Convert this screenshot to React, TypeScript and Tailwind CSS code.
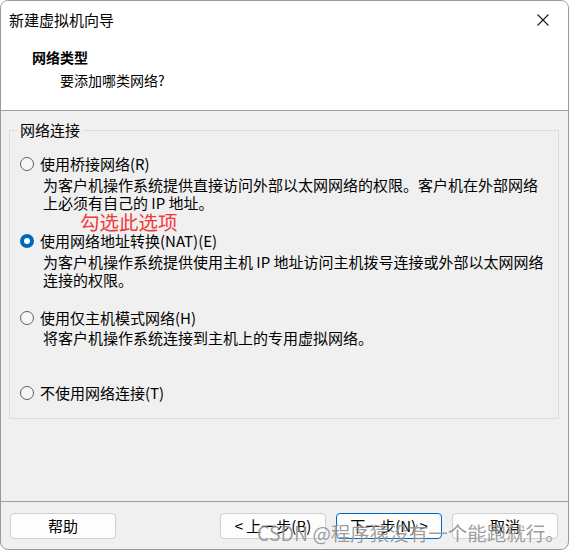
import React from "react";

const font = { fontFamily: '"Noto Sans CJK SC", "Noto Sans", sans-serif' };

function Radio({ checked }: { checked?: boolean }) {
  return checked ? (
    <span className="flex h-[14px] w-[14px] shrink-0 items-center justify-center rounded-full bg-[#0067c0]">
      <span className="h-[6px] w-[6px] rounded-full bg-white" />
    </span>
  ) : (
    <span className="h-[14px] w-[14px] shrink-0 rounded-full border border-[#5f5f5f] bg-[#f7f7f7]" />
  );
}

function Option({ label, checked, className }: { label: string; checked?: boolean; className?: string }) {
  return (
    <div className={"flex h-[20px] items-center gap-[6px] pl-[10px] text-[15px] leading-[20px] text-black " + (className ?? "")}>
      <Radio checked={checked} />
      <span>{label}</span>
    </div>
  );
}

function Desc({ lines, className }: { lines: string[]; className?: string }) {
  return (
    <div className={"pl-[33px] text-[15px] leading-[18px] text-black " + (className ?? "")}>
      {lines.map((l, i) => (
        <div key={i} className="whitespace-nowrap">
          {l}
        </div>
      ))}
    </div>
  );
}

function Btn({ children, primary }: { children: React.ReactNode; primary?: boolean }) {
  return (
    <button
      className={
        "flex h-[26px] w-[106px] items-center justify-center rounded-[4px] bg-[#fdfdfd] text-[15px] leading-[20px] text-black " +
        (primary ? "border border-[#0067c0]" : "border border-[#d0d0d0]")
      }
    >
      {children}
    </button>
  );
}

export default function App() {
  return (
    <div className="h-[551px] w-[570px] bg-white" style={font}>
      <div className="relative flex h-[550px] w-[569px] flex-col overflow-hidden rounded-[8px] border border-[#9a9a9a] bg-[#f0f0f0]">
        {/* header */}
        <div className="h-[110px] shrink-0 border-b border-[#a0a0a0] bg-white">
          <div className="flex h-[37px] items-center justify-between pl-[8px] pr-[19px]">
            <span className="text-[15px] leading-[20px] text-black">新建虚拟机向导</span>
            <svg width="12" height="12" viewBox="0 0 12 12" className="block">
              <path d="M0.5 0.5 L11.5 11.5 M11.5 0.5 L0.5 11.5" stroke="#1a1a1a" strokeWidth="1.1" fill="none" />
            </svg>
          </div>
          <div className="mt-[9px] pl-[31px] text-[14px] font-bold leading-[20px] text-black">网络类型</div>
          <div className="mt-[3px] pl-[59px] text-[14px] leading-[20px] text-black">要添加哪类网络?</div>
        </div>

        {/* body */}
        <div className="flex-1">
          <div className="relative ml-[8px] mt-[19px] h-[289px] w-[550px] border border-[#dcdcdc]">
            <span className="absolute left-[7px] top-[-11px] bg-[#f0f0f0] px-[3px] text-[15px] leading-[20px] text-black">
              网络连接
            </span>
            <Option className="mt-[23px]" label="使用桥接网络(R)" />
            <Desc
              className="mt-[2px]"
              lines={["为客户机操作系统提供直接访问外部以太网网络的权限。客户机在外部网络", "上必须有自己的 IP 地址。"]}
            />
            <div className="h-[19px] pl-[70px] text-[19.5px] leading-[19px] text-[#f03a3a]">勾选此选项</div>
            <Option checked label="使用网络地址转换(NAT)(E)" />
            <Desc
              className="mt-[2px]"
              lines={["为客户机操作系统提供使用主机 IP 地址访问主机拨号连接或外部以太网网络", "连接的权限。"]}
            />
            <Option className="mt-[19px]" label="使用仅主机模式网络(H)" />
            <Desc className="mt-[1px]" lines={["将客户机操作系统连接到主机上的专用虚拟网络。"]} />
            <Option className="mt-[36px]" label="不使用网络连接(T)" />
          </div>
        </div>

        {/* footer */}
        <div className="flex h-[48px] shrink-0 items-start border-t border-[#a0a0a0] pl-[9px] pr-[10px] pt-[11px]">
          <Btn>帮助</Btn>
          <div className="flex-1" />
          <div className="flex gap-[10px]">
            <Btn>&lt; 上一步(B)</Btn>
            <Btn primary>下一步(N) &gt;</Btn>
            <Btn>取消</Btn>
          </div>
        </div>

        <span
          className="pointer-events-none absolute left-[256px] top-[519px] whitespace-nowrap text-[19.5px] leading-[26px] text-[rgba(90,90,90,0.6)]"
          style={{ textShadow: "0 0 1px rgba(255,255,255,0.8)" }}
        >
          CSDN @程序猿没有一个能跑就行。
        </span>
      </div>
    </div>
  );
}
